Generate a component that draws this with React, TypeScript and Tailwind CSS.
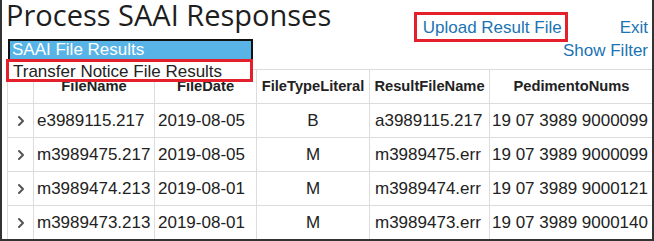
import { ChevronRight } from 'lucide-react'

const ROWS = [
  { fileName: 'e3989115.217', fileDate: '2019-08-05', type: 'B', result: 'a3989115.217', pedimento: '19 07 3989 9000099' },
  { fileName: 'm3989475.217', fileDate: '2019-08-05', type: 'M', result: 'm3989475.err', pedimento: '19 07 3989 9000099' },
  { fileName: 'm3989474.213', fileDate: '2019-08-01', type: 'M', result: 'm3989474.err', pedimento: '19 07 3989 9000121' },
  { fileName: 'm3989473.213', fileDate: '2019-08-01', type: 'M', result: 'm3989473.err', pedimento: '19 07 3989 9000140' },
]

export default function App() {
  return (
    <div className="relative w-[654px] h-[241px] overflow-hidden bg-white border-l-2 border-r-2 border-b-2 border-[#333] font-['Liberation_Sans',Arial,sans-serif] text-[#222]">
      <div className="flex justify-between items-start h-[69px]">
        <h1 className="pl-[4px] pt-[1px] font-['Open_Sans',sans-serif] text-[29px] leading-[28px] text-[#1e1e1e] whitespace-nowrap">
          Process SAAI Responses
        </h1>
        <div className="flex flex-col items-end pr-[4px] text-[17px] leading-[22px] text-[#1a74b4]">
          <div className="flex items-start">
            <a className="mt-[12px] border-[3px] border-[#e3202b] pl-[6px] pr-[3px] pt-[2px]">Upload Result File</a>
            <a className="mt-[17px] ml-[52px]">Exit</a>
          </div>
          <a className="-mt-[2px]">Show Filter</a>
        </div>
      </div>

      <table className="ml-[5px] w-[646px] table-fixed border-collapse">
        <colgroup>
          <col className="w-[26px]" />
          <col className="w-[121px]" />
          <col className="w-[102px]" />
          <col className="w-[113px]" />
          <col className="w-[120px]" />
          <col className="w-[164px]" />
        </colgroup>
        <thead>
          <tr className="h-[34px] text-[14.7px] font-bold text-[#222]">
            <th className="border border-[#dcdcdc]" />
            <th className="border border-[#dcdcdc] text-center">FileName</th>
            <th className="border border-[#dcdcdc] text-center">FileDate</th>
            <th className="border border-[#dcdcdc] text-center">FileTypeLiteral</th>
            <th className="border border-[#dcdcdc] text-center">ResultFileName</th>
            <th className="border border-[#dcdcdc] text-center">PedimentoNums</th>
          </tr>
        </thead>
        <tbody className="text-[17px]">
          {ROWS.map(r => (
            <tr key={r.fileName} className="h-[34px]">
              <td className="border border-[#dcdcdc] text-center">
                <ChevronRight size={16} strokeWidth={3} className="inline text-[#555]" />
              </td>
              <td className="border border-[#dcdcdc] pl-[3px] whitespace-nowrap">{r.fileName}</td>
              <td className="border border-[#dcdcdc] pl-[3px] whitespace-nowrap">{r.fileDate}</td>
              <td className="border border-[#dcdcdc] text-center">{r.type}</td>
              <td className="border border-[#dcdcdc] pl-[5px] whitespace-nowrap">{r.result}</td>
              <td className="border border-[#dcdcdc] pl-[2px] whitespace-nowrap">{r.pedimento}</td>
            </tr>
          ))}
        </tbody>
      </table>

      <div className="absolute left-[4px] top-[39px] w-[247px] text-[17px]">
        <div className="ml-[2px] w-[245px] border-2 border-b-0 border-[#111]">
          <div className="h-[18px] bg-[#58b4e6] pl-[2px] leading-[18px] text-white">SAAI File Results</div>
        </div>
        <div className="h-[23px] border-[3px] border-[#e3202b] bg-white pl-[4px] leading-[19px] text-[#222]">
          Transfer Notice File Results
        </div>
      </div>
    </div>
  )
}
